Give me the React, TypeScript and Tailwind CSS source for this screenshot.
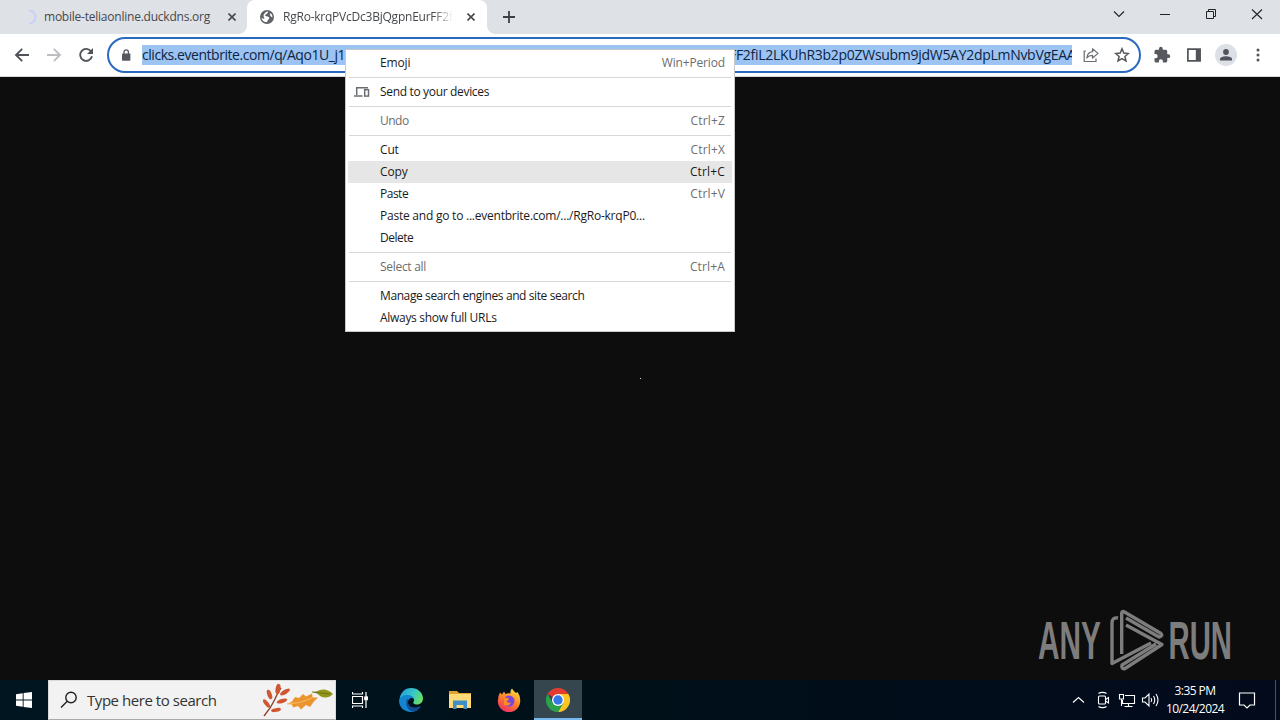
import { type FC, type ReactNode } from 'react';
import { clsx } from 'clsx';

type MenuEntry = { label: string; shortcut?: string; disabled?: boolean; active?: boolean; icon?: ReactNode; tracking?: string };

const DevicesIcon: FC = () => (
    <svg className="h-3 w-4" viewBox="0 0 16 12" fill="none" stroke="#6a6d70" strokeWidth="1.5">
        <path d="M14 1.7H2.7V9M0 10H8.5" />
        <rect x="10.7" y="3.7" width="3.8" height="6.4" />
    </svg>
);

const MENU_GROUPS: MenuEntry[][] = [
    [{ label: 'Emoji', shortcut: 'Win+Period' }],
    [{ label: 'Send to your devices', icon: <DevicesIcon />, tracking: 'tracking-[-0.33px]' }],
    [{ label: 'Undo', shortcut: 'Ctrl+Z', disabled: true, tracking: 'tracking-[-0.5px]' }],
    [
        { label: 'Cut', shortcut: 'Ctrl+X' },
        { label: 'Copy', shortcut: 'Ctrl+C', active: true },
        { label: 'Paste', shortcut: 'Ctrl+V', tracking: 'tracking-[-0.5px]' },
        { label: 'Paste and go to ...eventbrite.com/.../RgRo-krqP0...', tracking: 'tracking-[-0.23px]' },
        { label: 'Delete', tracking: 'tracking-[-0.5px]' },
    ],
    [{ label: 'Select all', shortcut: 'Ctrl+A', disabled: true, tracking: 'tracking-[-0.3px]' }],
    [
        { label: 'Manage search engines and site search', tracking: 'tracking-[-0.4px]' },
        { label: 'Always show full URLs', tracking: 'tracking-[-0.3px]' },
    ],
];

const App: FC = () => (
    <div className="relative flex h-[720px] w-[1280px] flex-col overflow-hidden bg-[#0d0d0d] font-['Open_Sans',sans-serif]">
        <TabStrip />
        <Toolbar />
        <main className="flex flex-1 flex-col justify-between">
            <div className="flex justify-center pt-[301px] pl-px">
                <span className="size-px bg-neutral-300" />
            </div>
            <div className="flex justify-end pr-10">
                <AnyRunLogo />
            </div>
        </main>
        <Taskbar />
        <ContextMenu />
    </div>
);

export default App;

const TabStrip: FC = () => (
    <header className="flex h-[34px] shrink-0 bg-[#dee1e6] text-xs text-[#45484c]">
        <div className="flex w-[247px] items-center pl-[21px]">
            <svg className="size-4" viewBox="0 0 16 16" fill="none" stroke="#c9d0fa" strokeWidth="2">
                <path d="M8 1.5A6.5 6.5 0 0 1 8 14.5" />
            </svg>
            <span className="ml-[7px] w-[184px] tracking-[-0.23px] whitespace-nowrap">mobile-teliaonline.duckdns.org</span>
            <CloseIcon />
        </div>
        <div className="relative flex w-60 items-center rounded-t-lg bg-white pl-3">
            <div className="absolute bottom-0 -left-2 size-2 bg-[radial-gradient(circle_at_0_0,transparent_7.5px,white_8px)]" />
            <div className="absolute -right-2 bottom-0 size-2 bg-[radial-gradient(circle_at_100%_0,transparent_7.5px,white_8px)]" />
            <svg className="size-4" viewBox="0 0 16 16">
                <circle cx="8" cy="8" r="7" fill="#5f6368" />
                <path d="M8.5 2.5C10 3 8.2 4.4 7 5.3S5.6 7 7.4 7.3 10.4 8 10.2 9.4 8 10.5 8.4 13C5 13.6 2.7 11 2.6 8.7 5 10.5 6.3 9.5 4.8 8 3.8 6 6 3 8.5 2.5Z" fill="#fff" />
                <path d="M11 4.6C12 3.8 13.7 6 13.4 8.5 12.3 8.3 10.4 6.4 11 4.6Z" fill="#fff" />
            </svg>
            <span className="ml-2 w-[170px] overflow-hidden mask-r-from-88% tracking-[-0.23px] whitespace-nowrap">RgRo-krqPVcDc3BjQgpnEurFF2f</span>
            <span className="ml-[14px]">
                <CloseIcon />
            </span>
        </div>
        <svg className="mt-[11px] ml-4 size-3" viewBox="0 0 12 12" stroke="#3c4043" strokeWidth="1.8">
            <path d="M6 0V12M0 6H12" />
        </svg>
        <svg className="mt-2 mr-[13px] ml-auto h-3 w-[154px]" viewBox="0 0 154 12" fill="none" stroke="#222" strokeWidth="1.1">
            <path d="M1 3.5L6 8.5L11 3.5M47 6.5H57" />
            <path d="M93.5 3.5H100.5V10.5H93.5ZM95.5 3.5V1.5H102.5V8.5H100.5" strokeWidth="1" />
            <path d="M139 1.5L149 11M149 1.5L139 11" />
        </svg>
    </header>
);

const CloseIcon: FC = () => (
    <svg className="size-2" viewBox="0 0 8 8" stroke="#45484c" strokeWidth="1.6">
        <path d="M0.5 0.5L7.5 7.5M7.5 0.5L0.5 7.5" />
    </svg>
);

const Toolbar: FC = () => (
    <div className="flex h-[43px] shrink-0 items-center border-b border-[#d5d7da] bg-white">
        <svg className="ml-3.5 h-4 w-20" viewBox="0 0 80 16" fill="none" strokeWidth="1.9">
            <path d="M15 8H2M8.2 1.8L2 8L8.2 14.2" stroke="#50545a" />
            <path d="M33 8H46M39.8 1.8L46 8L39.8 14.2" stroke="#bcbec1" />
            <path d="M77.2 4.6A6 6 0 1 0 78 9.3" stroke="#50545a" />
            <path d="M79 1V7H73Z" fill="#50545a" />
        </svg>
        <div className="ml-[13px] flex h-9 w-[1034px] items-center rounded-full border-2 border-[#2a69bf] pl-3">
            <svg className="h-3 w-2.5 shrink-0" viewBox="0 0 10 12">
                <rect x="1" y="4.5" width="8.4" height="7.2" rx="0.8" fill="#55585c" />
                <path d="M3 5V3A2.2 2.2 0 0 1 7.4 3V5" fill="none" stroke="#55585c" strokeWidth="1.3" />
            </svg>
            <div className="ml-[11px] flex h-5 w-[930px] shrink-0 overflow-hidden bg-[#9cc3f1] text-[14px] leading-5 whitespace-nowrap text-[#0b2545]">
                <span className="w-[203px] shrink-0 overflow-hidden tracking-[-0.45px]">clicks.eventbrite.com/q/Aqo1U_j1</span>
                <span className="ml-[384px] tracking-[-0.29px]">FF2fiL2LKUhR3b2p0ZWsubm9jdW5AY2dpLmNvbVgEAA</span>
            </div>
            <svg className="ml-[11px] size-4 shrink-0" viewBox="0 0 16 16" fill="none" stroke="#686c70" strokeWidth="1.2">
                <path d="M3 4H1.2V14.5H13V11.5" />
                <path d="M9.5 1.8L15 6.4L9.5 11V8.3C7 8.2 5.3 9 3.8 11C4.2 7.3 6.3 5 9.5 4.6Z" strokeLinejoin="round" />
            </svg>
            <svg className="ml-[15px] size-4 shrink-0" viewBox="0 0 16 16" fill="none" stroke="#55595d" strokeWidth="1.5">
                <path d="M8 1.8L9.8 6.1L14.4 6.5L10.9 9.5L12 14L8 11.6L4 14L5.1 9.5L1.6 6.5L6.2 6.1Z" />
            </svg>
        </div>
        <svg className="ml-3 size-[18px]" viewBox="0 0 24 24" fill="#55595d">
            <path d="M20.5 11H19V7a2 2 0 0 0-2-2h-4V3.5a2.5 2.5 0 0 0-5 0V5H4a2 2 0 0 0-2 2v3.8h1.5a2.7 2.7 0 0 1 0 5.4H2V20a2 2 0 0 0 2 2h3.8v-1.5a2.7 2.7 0 0 1 5.4 0V22H17a2 2 0 0 0 2-2v-4h1.5a2.5 2.5 0 0 0 0-5z" />
        </svg>
        <svg className="ml-4 h-3.5 w-3.5" viewBox="0 0 14 14" fill="none" stroke="#50545a" strokeWidth="1.7">
            <path d="M0.9 1.2H13.1V12.8H0.9Z" />
            <path d="M8.8 1H13V13H8.8Z" fill="#50545a" stroke="none" />
        </svg>
        <div className="ml-3.5 flex size-[22px] items-center justify-center rounded-full bg-[#dde0e7]">
            <svg className="size-3.5" viewBox="0 0 14 14" fill="#50545f">
                <circle cx="7" cy="4" r="2.9" />
                <path d="M1 12.5V11C1 9 5 8.2 7 8.2S13 9 13 11V12.5Z" />
            </svg>
        </div>
        <svg className="ml-[19px] h-3.5 w-1" viewBox="0 0 4 14" fill="#50545a">
            <circle cx="2" cy="2" r="1.5" />
            <circle cx="2" cy="7" r="1.5" />
            <circle cx="2" cy="12" r="1.5" />
        </svg>
    </div>
);

const ContextMenu: FC = () => (
    <div className="absolute top-[49px] left-[345px] w-[390px] border border-[#c8c8c8] bg-white p-0.5 text-xs text-[#1b1b1b]">
        {MENU_GROUPS.map((group, idx) => (
            <div key={idx}>
                {idx > 0 && <div className="mx-px my-[3px] h-px bg-[#d7d7d7]" />}
                {group.map(({ label, shortcut, disabled, active, icon, tracking }) => (
                    <div key={label} className={clsx('flex h-[22px] items-center pr-[7px]', active && 'bg-[#e6e6e6]', disabled && 'text-[#6d6d6d]')}>
                        <span className="w-8 pl-1.5">{icon}</span>
                        <span className={tracking ?? 'tracking-[-0.15px]'}>{label}</span>
                        <span className={clsx('ml-auto', shortcut?.startsWith('Ctrl') ? 'tracking-[0.15px]' : 'tracking-[-0.15px]', !active && 'text-[#6d6d6d]')}>
                            {shortcut}
                        </span>
                    </div>
                ))}
            </div>
        ))}
    </div>
);

const AnyRunLogo: FC = () => (
    <svg className="h-20 w-[210px]" viewBox="0 0 210 80" fill="#7d7d7d" fontFamily="Liberation Sans, sans-serif" fontSize="53" fontWeight="700">
        <text x="8" y="59" textLength="63" lengthAdjust="spacingAndGlyphs">
            ANY
        </text>
        <text x="138.5" y="59" textLength="63.5" lengthAdjust="spacingAndGlyphs">
            RUN
        </text>
        <g fill="none" stroke="#7d7d7d" strokeWidth="3.4" strokeLinejoin="round">
            <path d="M88 18Q82 17 82 23V63.5L121 43" />
            <path d="M91.7 54V13Q92 10.5 94.5 12L131 33.5Q133 36 129 37L96 18" />
            <path d="M96 25L132 44.5L95 68.5Q91 69.5 92 65L126 44" />
        </g>
    </svg>
);

const Taskbar: FC = () => (
    <footer className="flex h-10 shrink-0 bg-linear-to-r from-[#00151f] via-[#001019] via-50% to-[#030a1c] text-white">
        <div className="flex w-12 items-center justify-center">
            <svg className="size-4" viewBox="0 0 16 16" fill="#fff">
                <path d="M0 2.2L6.7 1.3V7.5H0ZM7.6 1.1L16 0V7.5H7.6ZM0 8.5H6.7V14.7L0 13.8ZM7.6 8.5H16V16L7.6 14.9Z" />
            </svg>
        </div>
        <div className="flex w-72 items-center border border-[#dadada] border-b-[#a9a9a9] bg-[#f2f2f2] pl-[11px] text-[#333]">
            <svg className="size-[18px] shrink-0" viewBox="0 0 18 18" fill="none" stroke="#222" strokeWidth="1.4">
                <circle cx="11" cy="6.5" r="5.2" />
                <path d="M7.3 10.2L1 16.5" />
            </svg>
            <span className="ml-[9px] w-[175px] shrink-0 text-[15px] tracking-[-0.45px] whitespace-nowrap">Type here to search</span>
            <AutumnLeaves />
        </div>
        <div className="flex w-12 items-center justify-center">
            <svg className="size-4" viewBox="0 0 16 16" fill="none" stroke="#fff" strokeWidth="1.2">
                <path d="M0.5 4.5H10.5V11.5H0.5ZM0.5 0V2H10.5V0M0.5 16V14H10.5V16M14 0V16" />
                <rect x="12.8" y="5" width="2.6" height="2.6" fill="#fff" />
            </svg>
        </div>
        <div className="ml-[3px] flex w-12 items-center justify-center">
            <EdgeIcon />
        </div>
        <div className="flex w-[49px] items-center justify-center">
            <svg className="h-5 w-[22px]" viewBox="0 0 22 20">
                <path d="M0 1H8L10 3H22V18H0Z" fill="#e2a430" />
                <path d="M0 4H22V18H0Z" fill="#ffdb77" />
                <path d="M4 10.5H18V19H14.5V15H7.5V19H4Z" fill="#3d8fc6" />
            </svg>
        </div>
        <div className="flex w-[49px] items-center justify-center">
            <FirefoxIcon />
        </div>
        <div className="ml-px flex w-12 items-center justify-center border-b-2 border-[#76b9ed] bg-[#36464f] pt-0.5">
            <ChromeIcon />
        </div>
        <svg className="mt-2.5 ml-auto h-5 w-[92px]" viewBox="0 0 92 20" fill="none" stroke="#fff" strokeWidth="1.1">
            <path d="M2 12.5L7.5 7.5L13 12.5" />
            <rect x="27.5" y="6" width="7" height="8" rx="1" />
            <path d="M34.5 9.5L37.5 7.5V13L34.5 11M27.5 3.5C29.5 2 33.5 2 35.5 3.5M27.5 16.5C29.5 18 33.5 18 35.5 16.5" />
            <path d="M54 5.5H63.5V13.5H51.5V10M57.5 13.5V16.5M53.5 16.5H61.5M48.5 4.5H52.5V9H48.5ZM50.5 9V16" />
            <path d="M71.5 8H74L78 4V16L74 12H71.5ZM80 8Q81.5 10 80 12M82.5 6Q85 10 82.5 14M85 4Q89 10 85 16" />
        </svg>
        <div className="flex w-16 flex-col items-center justify-center text-xs leading-[18px] tracking-[-0.55px]">
            <span>3:35 PM</span>
            <span>10/24/2024</span>
        </div>
        <svg className="mt-[11px] ml-[11px] size-[18px]" viewBox="0 0 18 18" fill="none" stroke="#fff" strokeWidth="1.2">
            <path d="M1.5 2H16.5V14H12L9 17L6 14H1.5Z" />
        </svg>
        <div className="ml-[19px] w-[5px] border-l border-[#4a5261]" />
    </footer>
);

const AutumnLeaves: FC = () => (
    <svg className="h-9 w-[72px] shrink-0" viewBox="0 0 72 36">
        <path d="M2 34Q9 26 13 17T19 6" fill="none" stroke="#8d3d26" strokeWidth="1.3" />
        <g fill="#cf5630">
            <ellipse cx="16" cy="7" rx="2.4" ry="5.2" transform="rotate(10 16 7)" />
            <ellipse cx="23" cy="10" rx="2.2" ry="5.6" transform="rotate(60 23 10)" />
            <ellipse cx="7.5" cy="12.5" rx="2.2" ry="5" transform="rotate(-20 7.5 12.5)" />
            <ellipse cx="20" cy="19" rx="2" ry="5.5" transform="rotate(72 20 19)" />
            <ellipse cx="4.5" cy="21.5" rx="2" ry="5" transform="rotate(-38 4.5 21.5)" />
            <ellipse cx="14" cy="28" rx="1.9" ry="5" transform="rotate(80 14 28)" />
        </g>
        <path d="M25 22L30 19.5L33 15L37 16L41 12L44 14.5L50 11.5L50.5 15.5L56 15.5L52 19.5L48 25L44 23L39 27.5L36 24L31 25.5L30 22.5Z" fill="#eb9531" />
        <path d="M25 22Q38 22 50 16" fill="none" stroke="#f9be64" strokeWidth="0.9" />
        <path d="M50 10Q56 11 58 14Q65 18 71 12Q65 6 58 8Q54 10 50 10Z" fill="#91951c" />
        <path d="M50 10L68 12" stroke="#626d15" strokeWidth="0.8" />
    </svg>
);

const EdgeIcon: FC = () => (
    <svg className="size-6" viewBox="0 0 24 24">
        <defs>
            <linearGradient id="edge-top" x1="0" x2="1" y1="0.2" y2="0.6">
                <stop offset="0" stopColor="#229de0" />
                <stop offset="0.55" stopColor="#36c8c4" />
                <stop offset="1" stopColor="#6bdf62" />
            </linearGradient>
        </defs>
        <path d="M0.5 12C1 4.5 6 0 12 0C19 0 24 5 24 10.5C24 14 21.5 16.5 18 16.5C15.5 16.5 13.7 15.6 14.5 14C16.5 10.7 13 8 9 8C5 8 1.5 9.5 0.5 12Z" fill="url(#edge-top)" />
        <path d="M0 12.5C1 9 4.5 7 8.5 7C12 7 14.8 8.8 15 11C12 8.5 8.5 11.5 9 15C9.5 19 15 21.5 21.8 18.2C19.5 22 16 24 12 24C5 24 0 19 0 12.5Z" fill="#1685d1" />
        <path d="M9 10.5C5.5 14 7 21.5 14 23.7C17.5 23.2 20 21 21.8 18.2C15 21.5 9.5 19 9 15Z" fill="#114b91" />
    </svg>
);

const FirefoxIcon: FC = () => (
    <svg className="size-6" viewBox="0 0 24 24">
        <defs>
            <linearGradient id="fox-body" x1="0.8" x2="0.25" y1="0" y2="1">
                <stop offset="0" stopColor="#ffe34b" />
                <stop offset="0.45" stopColor="#ff8b25" />
                <stop offset="1" stopColor="#ef2a68" />
            </linearGradient>
        </defs>
        <path d="M3 4.5L5 6.5L7 3.5L8.5 6Q11 5 13.5 5.5Q13 2.5 15 0.5Q16.5 3 19 5L20.5 4Q23.5 8 23.2 13A11.2 11.2 0 0 1 0.8 13Q0.8 8 3 4.5Z" fill="url(#fox-body)" />
        <circle cx="12" cy="13" r="5.5" fill="#7845df" />
        <path d="M6.5 9L12 10.5Q12 12.5 9.5 13Q10.5 15.5 14 14.5Q12 19 7 17Z" fill="#ff8b25" />
    </svg>
);

const ChromeIcon: FC = () => (
    <svg className="size-6" viewBox="0 0 24 24">
        <path d="M12 12L1.6 6A12 12 0 0 1 22.4 6Z" fill="#e23c30" />
        <path d="M12 12V6H22.4A12 12 0 0 1 12 24L17.2 15Z" fill="#fbc525" />
        <path d="M1.6 6L6.8 15L12 18L17.2 15L12 24A12 12 0 0 1 1.6 6Z" fill="#2aa14b" />
        <circle cx="12" cy="12" r="6" fill="#fff" />
        <circle cx="12" cy="12" r="4.7" fill="#3579e8" />
    </svg>
);
